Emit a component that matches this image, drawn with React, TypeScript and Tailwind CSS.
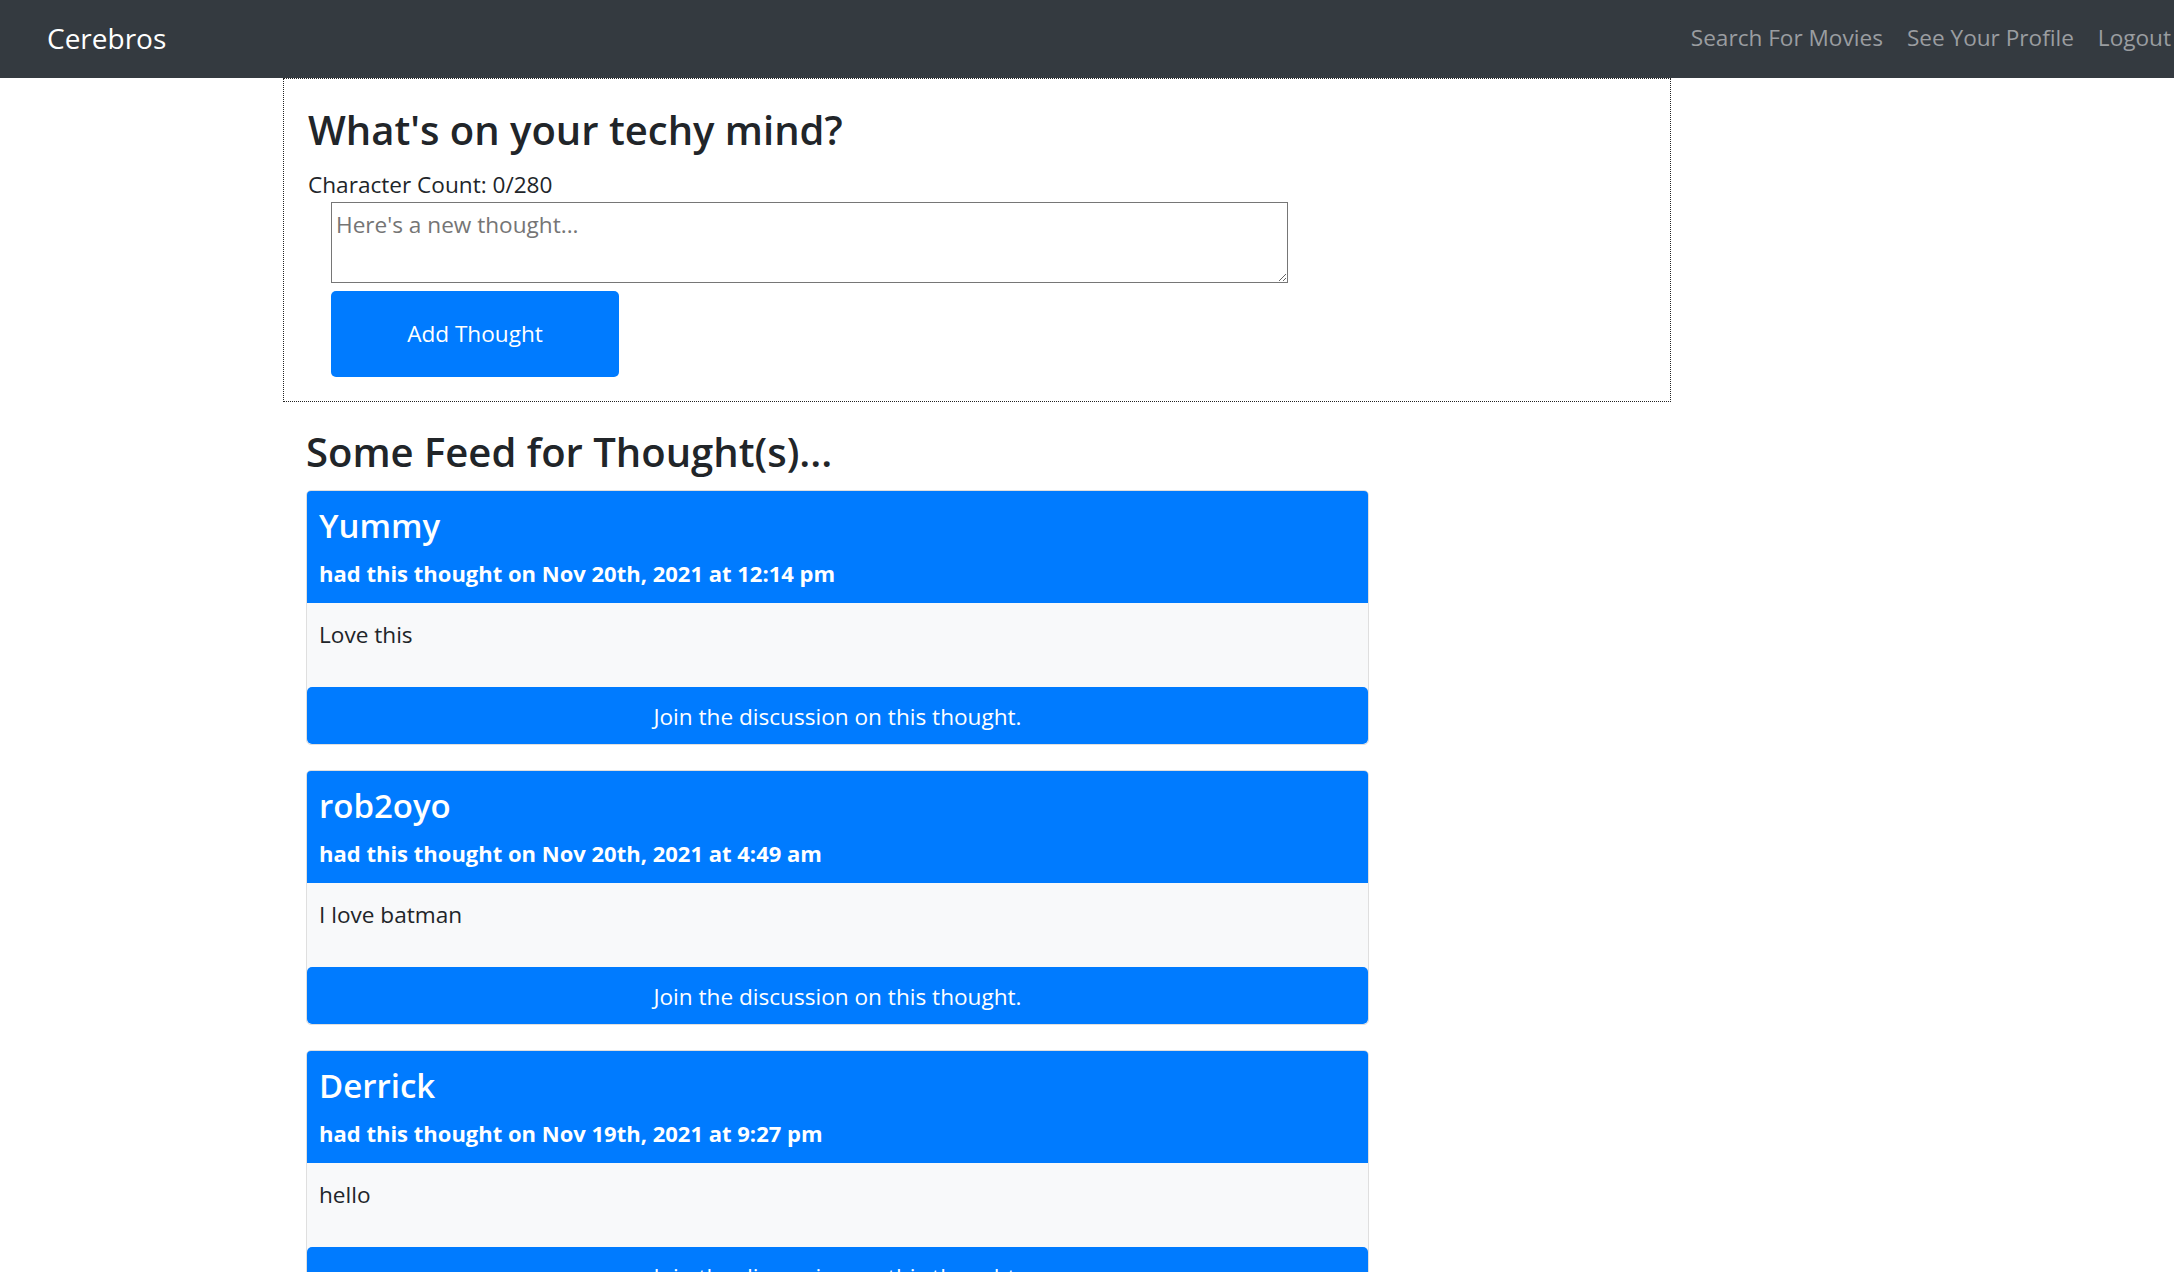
const thoughts = [
  { user: "Yummy", date: "Nov 20th, 2021 at 12:14 pm", text: "Love this" },
  { user: "rob2oyo", date: "Nov 20th, 2021 at 4:49 am", text: "I love batman" },
  { user: "Derrick", date: "Nov 19th, 2021 at 9:27 pm", text: "hello" },
];

const ThoughtCard = ({ user, date, text }: { user: string; date: string; text: string }) => (
  <div className="mb-[25px] w-[1063px] rounded-[5px] border border-[#dfdfdf] bg-[#f8f9fa] overflow-hidden">
    <div className="bg-[#007bff] px-[12px] pt-[15px] pb-[13px] text-white">
      <h4 className="text-[33px] leading-[40px] font-semibold">{user}</h4>
      <p className="mt-[11px] text-[22px] leading-[33px] font-bold">had this thought on {date}</p>
    </div>
    <div className="px-[12px] pt-[15px] pb-[36px]">
      <p className="text-[22.6px] leading-[33px]">{text}</p>
    </div>
    <button className="block w-full h-[57px] rounded-[5px] bg-[#007bff] pt-[2px] text-[22.6px] text-white">
      Join the discussion on this thought.
    </button>
  </div>
);

export default function App() {
  return (
    <div className="min-h-screen bg-white text-[#212529] font-['Open_Sans','Noto_Sans',sans-serif]">
      <nav className="flex h-[78px] items-center bg-[#343a40] pl-[47px] pr-[3px] pb-[2px]">
        <a className="text-[28px] leading-none text-white">Cerebros</a>
        <div className="ml-auto flex gap-[24px] text-[22.6px] leading-none text-[#9a9da0]">
          <a>Search For Movies</a>
          <a>See Your Profile</a>
          <a>Logout</a>
        </div>
      </nav>

      <main className="pl-[283px]">
        <section className="w-[1388px] h-[324px] border border-dotted border-[#222] px-[24px] pt-[27px]">
          <h3 className="text-[40px] leading-[48px] font-semibold">What's on your techy mind?</h3>
          <p className="mt-[14px] text-[22.6px] leading-[33px]">Character Count: 0/280</p>
          <div className="pl-[23px]">
            <textarea
              placeholder="Here's a new thought..."
              className="block mt-[1px] w-[957px] h-[81px] border border-[#767676] px-[4px] pt-[7px] pb-[2px] text-[22.6px] leading-[30px] placeholder:text-[#757575]"
            />
            <button className="mt-[8px] h-[86px] w-[288px] rounded-[5px] bg-[#007bff] text-[22.6px] text-white">
              Add Thought
            </button>
          </div>
        </section>

        <section className="pl-[23px] pt-[26px]">
          <h3 className="mb-[14px] text-[40px] leading-[48px] font-semibold">Some Feed for Thought(s)...</h3>
          {thoughts.map((t) => (
            <ThoughtCard key={t.user} {...t} />
          ))}
        </section>
      </main>
    </div>
  );
}
